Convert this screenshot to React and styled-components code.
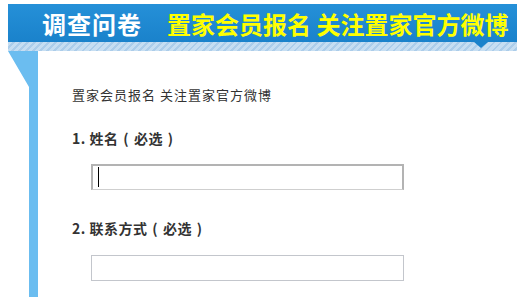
import styled, {createGlobalStyle} from "styled-components";

const GlobalStyle = createGlobalStyle`
  html, body {
    margin: 0;
    padding: 0;
    background: #ffffff;
  }
  body {
    font-family: "Noto Sans CJK SC", "Noto Sans", sans-serif;
    text-spacing-trim: space-all;
    overflow: hidden;
  }
`;

const Page = styled.div`
  width: 517px;
  height: 297px;
  padding: 4px 0 0 8px;
  box-sizing: border-box;
  overflow: hidden;
`;

const Header = styled.div`
  position: relative;
  height: 38px;
  display: flex;
  align-items: center;
  gap: 25px;
  padding-left: 34px;
  background: linear-gradient(#2590d8, #1a82cb);
  white-space: nowrap;
  &::after {
    content: "";
    position: absolute;
    left: 466px;
    bottom: -6px;
    border-left: 7px solid transparent;
    border-right: 7px solid transparent;
    border-top: 6px solid #1a82cb;
  }
`;

const Title = styled.span`
  font-size: 24px;
  line-height: 38px;
  font-weight: 700;
  color: ${props => props.color || '#ffffff'};
  letter-spacing: ${props => props.spacing || '0'};
  margin-top: 1px;
`;

const Stripes = styled.div`
  height: 9px;
  background: repeating-linear-gradient(
    135deg,
    #c6def2 0px,
    #c6def2 3px,
    #accdea 3px,
    #accdea 5px
  );
`;

const Body = styled.div`
  display: flex;
`;

const Fold = styled.div`
  flex: none;
  width: 30px;
  background: #6bbdf0;
  clip-path: polygon(0 0, 30px 0, 30px 100%, 21px 100%, 21px 36px);
`;

const Content = styled.div`
  flex: 1;
  padding: 34px 0 20px 34px;
  color: #333333;
`;

const Intro = styled.div`
  font-size: 13px;
  line-height: 20px;
  letter-spacing: 1px;
`;

const Question = styled.div`
  margin-top: ${props => props.gap || 28}px;
`;

const Label = styled.div`
  font-size: 14px;
  line-height: 20px;
  font-weight: 700;
  letter-spacing: 0.5px;
  color: #333333;
  white-space: nowrap;
`;

const Paren = styled.span`
  display: inline-block;
  width: 1.1em;
  text-align: center;
`;

const Field = styled.div`
  position: relative;
  width: 313px;
  height: 26px;
  margin: ${props => props.gap || 17}px 0 0 19px;
`;

const Input = styled.input`
  display: block;
  width: 100%;
  height: 100%;
  box-sizing: border-box;
  margin: 0;
  padding: 0 6px;
  font-size: 13px;
  outline: none;
  background: #ffffff;
  border: 1px solid ${props => props.focused ? '#b3b3b3' : '#c3c6cc'};
  border-top-width: ${props => props.focused ? '2px' : '1px'};
  border-left-width: ${props => props.focused ? '2px' : '1px'};
  border-right-width: ${props => props.focused ? '2px' : '1px'};
  border-bottom-color: ${props => props.focused ? '#cfcfcf' : '#c3c6cc'};
`;

const Caret = styled.span`
  position: absolute;
  left: 7px;
  top: 3px;
  width: 1px;
  height: 20px;
  background: #000000;
`;

function QuestionLabel({num, title}) {
    return <Label>
        {num}. {title}<Paren>(</Paren>必选<Paren>)</Paren>
    </Label>
}

export default function App() {
    return <Page>
        <GlobalStyle/>
        <Header>
            <Title spacing="1px">调查问卷</Title>
            <Title color="#ffff00">置家会员报名 关注置家官方微博</Title>
        </Header>
        <Stripes/>
        <Body>
            <Fold/>
            <Content>
                <Intro>置家会员报名 关注置家官方微博</Intro>
                <Question gap={23}>
                    <QuestionLabel num={1} title="姓名"/>
                    <Field gap={16}>
                        <Input type="text" focused/>
                        <Caret/>
                    </Field>
                </Question>
                <Question gap={28}>
                    <QuestionLabel num={2} title="联系方式"/>
                    <Field gap={17}>
                        <Input type="text"/>
                    </Field>
                </Question>
            </Content>
        </Body>
    </Page>
}
